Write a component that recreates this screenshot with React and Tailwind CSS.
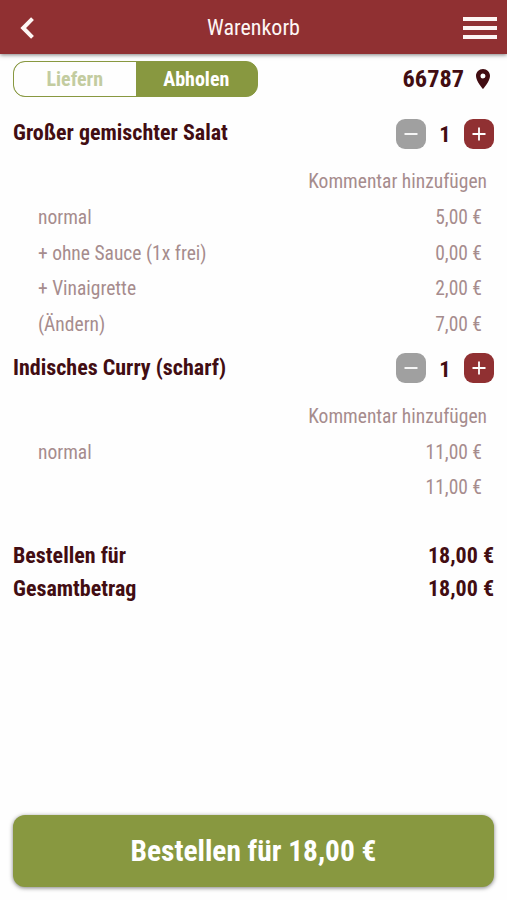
import { useState } from "react";

const PLZ = "66787";

const ITEMS = [
  {
    id: 1,
    nom: "Großer gemischter Salat",
    lines: [
      { label: "normal", price: 5 },
      { label: "+ ohne Sauce (1x frei)", price: 0 },
      { label: "+ Vinaigrette", price: 2 },
      { label: "(Ändern)", price: 7 },
    ],
  },
  {
    id: 2,
    nom: "Indisches Curry (scharf)",
    lines: [
      { label: "normal", price: 11 },
      { label: "", price: 11 },
    ],
  },
];

function formatPrice(value) {
  return `${value.toFixed(2).replace(".", ",")} €`;
}

function BackIcon() {
  return (
    <svg viewBox="0 0 14 22" fill="none" stroke="currentColor" strokeWidth="4" className="w-3.5 h-[22px]">
      <path d="M12.500 1.600 3.200 11l9.300 9.400" />
    </svg>
  );
}

function MenuIcon() {
  return (
    <svg viewBox="0 0 34 24" fill="currentColor" className="w-[34px] h-6">
      <path d="M0 1h34v4H0zM0 10h34v4H0zM0 19h34v4H0z" />
    </svg>
  );
}

function PinIcon() {
  return (
    <svg viewBox="5 2 14 20" fill="currentColor" className="w-3.5 h-5">
      <path d="M12 2C8.13 2 5 5.13 5 9c0 5.25 7 13 7 13s7-7.75 7-13c0-3.87-3.13-7-7-7zm0 9.500a2.500 2.500 0 1 1 0-5 2.500 2.500 0 0 1 0 5z" />
    </svg>
  );
}

function Stepper({ count, onChange }) {
  return (
    <div className="flex items-center">
      <button
        onClick={() => onChange(Math.max(1, count - 1))}
        aria-label="Weniger"
        className="w-[30px] h-[30px] rounded-[9px] bg-[#a0a0a0] text-white flex items-center justify-center"
      >
        <svg viewBox="0 0 14 14" stroke="currentColor" strokeWidth="1.8" className="w-3.5 h-3.5">
          <path d="M.5 7h13" />
        </svg>
      </button>
      <span className="w-[38px] pt-px text-center text-[22.500px] leading-[30px] font-bold">{count}</span>
      <button
        onClick={() => onChange(count + 1)}
        aria-label="Mehr"
        className="w-[30px] h-[30px] rounded-[9px] bg-[#903032] text-white flex items-center justify-center"
      >
        <svg viewBox="0 0 14 14" stroke="currentColor" strokeWidth="1.8" className="w-3.5 h-3.5">
          <path d="M.5 7h13M7 .5v13" />
        </svg>
      </button>
    </div>
  );
}

function CartItem({ item }) {
  const [count, setCount] = useState(1);

  return (
    <section>
      <div className="h-[46px] flex items-start justify-between">
        <h2 className="pt-px text-[22px] leading-[28px] font-bold">{item.nom}</h2>
        <Stepper count={count} onChange={setCount} />
      </div>
      <div className="h-9 pr-[7px] text-right text-[19.500px] leading-9 text-[#a68c8d]">Kommentar hinzufügen</div>
      {item.lines.map((line, i) => (
        <div key={i} className="h-[35.500px] pl-[25px] pr-[12px] flex justify-between text-[19.500px] leading-9 text-[#a68c8d]">
          <span>{line.label}</span>
          <span>{formatPrice(line.price)}</span>
        </div>
      ))}
    </section>
  );
}

export default function App() {
  const [mode, setMode] = useState("Abholen");

  return (
    <div className="w-full h-[900px] flex flex-col bg-[#fefefe] text-[#420d12] font-['Roboto_Condensed',Roboto,sans-serif] [font-stretch:75%]">
      <header className="h-[54px] shrink-0 pl-5 pr-2.5 flex items-center justify-between bg-[#903032] text-[#fdf6f4] shadow-[0_1px_4px_rgba(0,0,0,0.5)]">
        <div className="w-6 pt-px">
          <BackIcon />
        </div>
        <h1 className="text-[22px] pt-px">Warenkorb</h1>
        <div className="pt-px">
          <MenuIcon />
        </div>
      </header>

      <main className="grow px-[13px]">
        <div className="mt-[7px] h-9 flex items-center justify-between">
          <div className="w-[245px] h-9 flex rounded-xl overflow-hidden border border-[#889840] bg-[#889840]">
            {["Liefern", "Abholen"].map((m) => (
              <button
                key={m}
                onClick={() => setMode(m)}
                className={`flex-1 text-[20px] font-bold ${m === mode ? "bg-[#889840] text-white" : "rounded-l-[11px] bg-[#fefefe] text-[#c3cca0]"}`}
              >
                {m}
              </button>
            ))}
          </div>
          <div className="pr-1 flex items-center gap-3 text-[24.300px] font-bold">
            <span>{PLZ}</span>
            <PinIcon />
          </div>
        </div>

        <div className="mt-[21px] flex flex-col gap-[10.500px]">
          {ITEMS.map((item) => (
            <CartItem key={item.id} item={item} />
          ))}
        </div>

        <dl className="mt-[33px] text-[22px] leading-[33px] font-bold">
          {["Bestellen für", "Gesamtbetrag"].map((label) => (
            <div key={label} className="flex justify-between">
              <dt>{label}</dt>
              <dd>{formatPrice(18)}</dd>
            </div>
          ))}
        </dl>
      </main>

      <button className="mx-[13px] mb-[13px] h-[72px] pt-px shrink-0 rounded-xl bg-[#889840] text-white text-[29.400px] font-bold shadow-[0_1px_4px_rgba(0,0,0,0.5)]">
        Bestellen für {formatPrice(18)}
      </button>
    </div>
  );
}
